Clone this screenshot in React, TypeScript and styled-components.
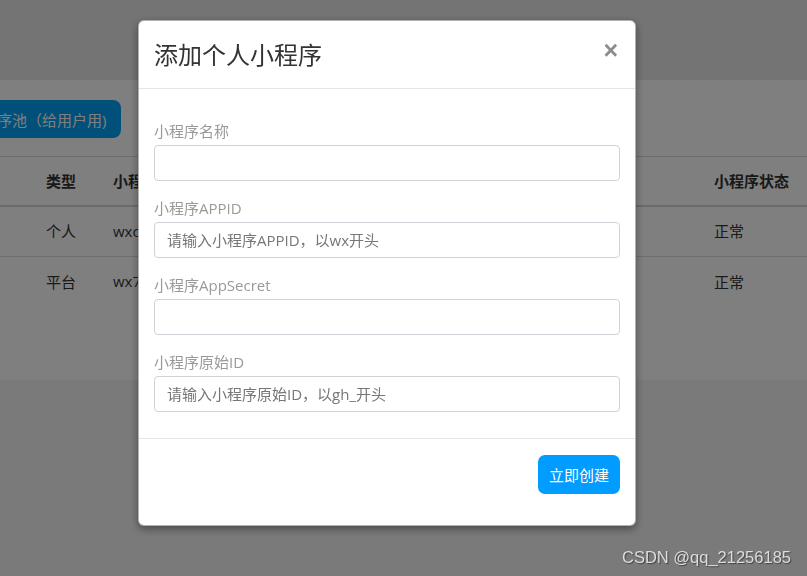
import styled, { createGlobalStyle } from 'styled-components';

const GlobalStyle = createGlobalStyle`
  * { box-sizing: border-box; }
  html, body { margin: 0; padding: 0; }
  body {
    background: #f4f4f4;
    font-family: "Open Sans", "Noto Sans CJK SC", sans-serif;
    color: #333;
  }
`;

const Page = styled.div`
  position: relative;
  width: 807px;
  height: 576px;
  overflow: hidden;
`;

const TopBand = styled.div`
  height: 80px;
  background: #e8e8e8;
`;

const Card = styled.div`
  height: 300px;
  margin-left: -97px;
  padding-top: 20px;
  background: #fff;
`;

const Toolbar = styled.div`
  padding: 0 16px 18px;
  border-bottom: 1px solid #d9d9d9;
`;

const PoolButton = styled.button`
  height: 38px;
  padding: 0 15px 0 18px;
  border: none;
  border-radius: 8px;
  background: #00a0f4;
  color: #fff;
  font: 15px "Open Sans", "Noto Sans CJK SC", sans-serif;
  white-space: nowrap;
`;

const Row = styled.div<{ $head?: boolean; $last?: boolean }>`
  display: grid;
  grid-template-columns: 135px 67px 245px 180px 176px 1fr;
  align-items: center;
  height: 50px;
  padding-bottom: 2px;
  border-bottom: ${(p) =>
    p.$head ? '2px solid #d6d6d6' : p.$last ? 'none' : '1px solid #dcdcdc'};
  font-weight: ${(p) => (p.$head ? 700 : 400)};
  color: #333;
`;

const Cell = styled.div`
  padding: 0 8px;
  font-size: 15px;
  white-space: nowrap;
  overflow: hidden;
`;

const Overlay = styled.div`
  position: fixed;
  inset: 0;
  padding: 20px 0 0 138px;
  background: rgba(0, 0, 0, 0.5);
`;

const Modal = styled.div`
  width: 498px;
  background: #fff;
  border: 1px solid rgba(0, 0, 0, 0.3);
  border-radius: 6px;
  box-shadow: 0 3px 9px rgba(0, 0, 0, 0.4);
`;

const ModalHeader = styled.div`
  display: flex;
  align-items: center;
  justify-content: space-between;
  height: 68px;
  padding: 0 15px;
  border-bottom: 1px solid #e5e5e5;
`;

const Title = styled.h4`
  margin: 0;
  font-size: 24px;
  font-weight: 400;
  line-height: 1;
  color: #333;
`;

const Close = styled.button`
  margin: -9px 2px 0 0;
  padding: 0;
  border: none;
  background: none;
  font: bold 25px "Liberation Sans", sans-serif;
  line-height: 1;
  color: #8c8c8c;
`;

const ModalBody = styled.div`
  padding: 32px 15px 9px;
`;

const Group = styled.div`
  margin-bottom: 17px;
`;

const Label = styled.label`
  display: block;
  margin-bottom: 4px;
  font-size: 15px;
  line-height: 20px;
  color: #999;
`;

const Input = styled.input`
  display: block;
  width: 100%;
  height: 36px;
  padding: 0 12px;
  border: 1px solid #cfd3d9;
  border-radius: 4px;
  font: 15px "Open Sans", "Noto Sans CJK SC", sans-serif;
  color: #333;
  outline: none;

  &::placeholder {
    color: #767676;
  }
`;

const ModalFooter = styled.div`
  display: flex;
  justify-content: flex-end;
  padding: 16px 15px 31px;
  border-top: 1px solid #e5e5e5;
`;

const CreateButton = styled.button`
  height: 39px;
  padding: 0 11px;
  border: none;
  border-radius: 7px;
  background: #009cff;
  color: #fff;
  font: 15px "Open Sans", "Noto Sans CJK SC", sans-serif;
`;

const Watermark = styled.div`
  position: absolute;
  right: 16px;
  bottom: 9px;
  font: 16.5px "Liberation Sans", sans-serif;
  line-height: 19px;
  color: #dcdcdc;
  text-shadow: 1px 1px 1px rgba(0, 0, 0, 0.45);
`;

const rows = [
  { type: '个人', appid: 'wxc8a3b2e9f1d7c045', name: '个人小程序', gh: 'gh_3a8c1e', status: '正常' },
  { type: '平台', appid: 'wx7d41f0c2a6e9b318', name: '平台小程序', gh: 'gh_7e5b2c', status: '正常' },
];

const fields = [
  { label: '小程序名称', placeholder: '' },
  { label: '小程序APPID', placeholder: '请输入小程序APPID，以wx开头' },
  { label: '小程序AppSecret', placeholder: '' },
  { label: '小程序原始ID', placeholder: '请输入小程序原始ID，以gh_开头' },
];

export default function App() {
  return (
    <Page>
      <GlobalStyle />
      <TopBand />
      <Card>
        <Toolbar>
          <PoolButton>加入小程序池（给用户用)</PoolButton>
        </Toolbar>
        <Row $head>
          <Cell>序号</Cell>
          <Cell>类型</Cell>
          <Cell>小程序APPID</Cell>
          <Cell>小程序名称</Cell>
          <Cell>原始ID</Cell>
          <Cell>小程序状态</Cell>
        </Row>
        {rows.map((r, i) => (
          <Row key={r.appid} $last={i === rows.length - 1}>
            <Cell>{i + 1}</Cell>
            <Cell>{r.type}</Cell>
            <Cell>{r.appid}</Cell>
            <Cell>{r.name}</Cell>
            <Cell>{r.gh}</Cell>
            <Cell>{r.status}</Cell>
          </Row>
        ))}
      </Card>

      <Overlay>
        <Modal>
          <ModalHeader>
            <Title>添加个人小程序</Title>
            <Close aria-label="关闭">×</Close>
          </ModalHeader>
          <ModalBody>
            {fields.map((f) => (
              <Group key={f.label}>
                <Label>{f.label}</Label>
                <Input placeholder={f.placeholder} />
              </Group>
            ))}
          </ModalBody>
          <ModalFooter>
            <CreateButton>立即创建</CreateButton>
          </ModalFooter>
        </Modal>
      </Overlay>

      <Watermark>CSDN @qq_21256185</Watermark>
    </Page>
  );
}
